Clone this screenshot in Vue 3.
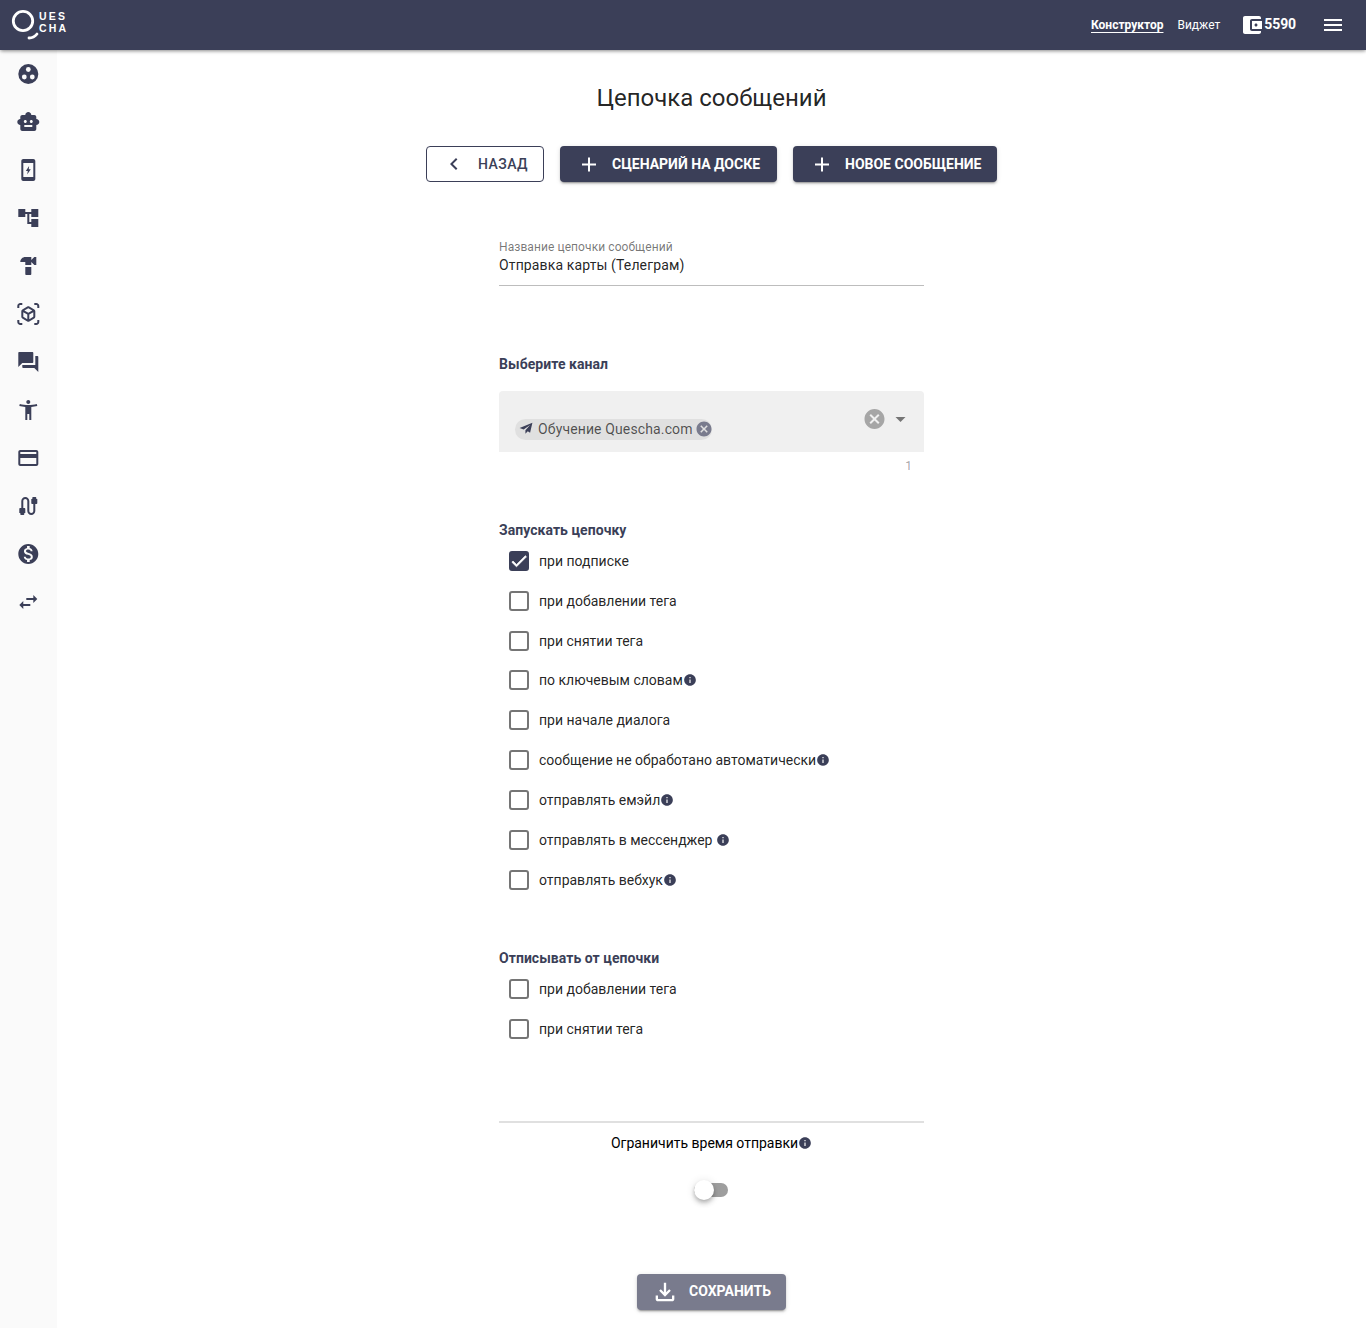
<template>
  <div class="page">
    <header class="topbar">
      <div class="logo">
        <svg class="logo-mark" width="30" height="34" viewBox="0 0 30 34">
          <circle cx="13" cy="12" r="9.7" fill="none" stroke="#fff" stroke-width="2.8" />
          <path d="M19 29c3 0 6-1.500 8-4" fill="none" stroke="#fff" stroke-width="2.800" stroke-linecap="round" />
        </svg>
        <div class="logo-text"><span>UES</span><span>CHA</span></div>
      </div>
      <nav class="topnav">
        <a class="topnav-link active">Конструктор</a>
        <a class="topnav-link">Виджет</a>
      </nav>
      <div class="balance">
        <svg width="24" height="24" viewBox="0 0 24 24" fill="#fff"><path :d="icons.wallet" /></svg>
        <span>5590</span>
      </div>
      <svg class="menu" width="24" height="24" viewBox="0 0 24 24" fill="#fff"><path d="M3 18h18v-2H3v2zm0-5h18v-2H3v2zm0-7v2h18V6H3z" /></svg>
    </header>

    <div class="body">
      <aside class="sidebar">
        <div v-for="item in sideItems" :key="item.name" class="side-item">
          <svg width="24" height="24" viewBox="-0.3 0 24 24" fill="#3b3f58">
            <template v-if="item.name === 'dots'">
              <circle cx="12" cy="12" r="10" />
              <circle cx="12" cy="7.500" r="2.400" fill="#fafafa" />
              <circle cx="8" cy="15" r="2.400" fill="#fafafa" />
              <circle cx="16" cy="15" r="2.400" fill="#fafafa" />
            </template>
            <path v-else :d="item.d" />
          </svg>
        </div>
      </aside>

      <main class="content">
        <h1 class="title">Цепочка сообщений</h1>

        <div class="actions">
          <button class="btn btn-outline">
            <svg width="24" height="24" viewBox="0 0 24 24" fill="currentColor"><path d="M15.41 7.41L14 6l-6 6 6 6 1.41-1.41L10.83 12z" /></svg>
            <span>Назад</span>
          </button>
          <button class="btn btn-dark btn-board">
            <svg width="24" height="24" viewBox="-1 -0.5 24 24" fill="currentColor"><path :d="icons.plus" /></svg>
            <span>Сценарий на доске</span>
          </button>
          <button class="btn btn-dark btn-new">
            <svg width="24" height="24" viewBox="-1 -0.5 24 24" fill="currentColor"><path :d="icons.plus" /></svg>
            <span>Новое сообщение</span>
          </button>
        </div>

        <form class="form" @submit.prevent>
          <div class="field">
            <div class="field-label">Название цепочки сообщений</div>
            <div class="field-value">Отправка карты (Телеграм)</div>
          </div>

          <div class="section-title channel-title">Выберите канал</div>
          <div class="select">
            <div class="chip">
              <svg class="chip-icon" width="14" height="14" viewBox="0 0 24 24" fill="#3b3f58"><path d="M23 3L1 12l7 2.500L19 7l-8 9v6l4-4.500 4 2.500z" /></svg>
              <span class="chip-text">Обучение Quescha.com</span>
              <svg class="chip-close" width="18" height="18" viewBox="0 0 24 24" fill="#797b8d"><path :d="icons.cancel" /></svg>
            </div>
            <svg class="select-clear" width="24" height="24" viewBox="-0.5 0 24 24" fill="#a6a6a6"><path :d="icons.cancel" /></svg>
            <svg class="select-caret" width="24" height="24" viewBox="-0.5 0 24 24" fill="#757575"><path d="M7 10l5 5 5-5z" /></svg>
          </div>
          <div class="counter">1</div>

          <div class="section-title start-title">Запускать цепочку</div>
          <div class="checks start-checks">
            <label v-for="row in startRows" :key="row.text" class="check-row">
              <span class="box" :class="{ checked: row.checked }">
                <svg v-if="row.checked" width="20" height="20" viewBox="0 0 24 24" fill="#fff" stroke="#fff" stroke-width="0.8"><path d="M9 16.170L4.830 12l-1.420 1.410L9 19 21 7l-1.410-1.410z" /></svg>
              </span>
              <span class="check-text">{{ row.text }}</span>
              <svg v-if="row.info" class="info" :class="{ spaced: row.spaced }" width="14" height="14" viewBox="0 0 24 24" fill="#3b3f58"><path :d="icons.info" /></svg>
            </label>
          </div>

          <div class="section-title stop-title">Отписывать от цепочки</div>
          <div class="checks stop-checks">
            <label v-for="text in stopRows" :key="text" class="check-row">
              <span class="box"></span>
              <span class="check-text">{{ text }}</span>
            </label>
          </div>

          <div class="limit">
            <span class="limit-text">Ограничить время отправки</span>
            <svg class="info" width="14" height="14" viewBox="0 0 24 24" fill="#3b3f58"><path :d="icons.info" /></svg>
          </div>
          <div class="switch-wrap">
            <div class="switch"><span class="thumb"></span></div>
          </div>

          <div class="save-wrap">
            <button class="btn btn-save">
              <svg width="28" height="28" viewBox="0 0 24 24" fill="currentColor"><path d="M18 15v3H6v-3H4v3c0 1.100.9 2 2 2h12c1.100 0 2-.9 2-2v-3h-2zm-1-4l-1.410-1.410L13 12.170V4h-2v8.170L8.410 9.590 7 11l5 5 5-5z" /></svg>
              <span>Сохранить</span>
            </button>
          </div>
        </form>
      </main>
    </div>
  </div>
</template>

<script setup>
const icons = {
  wallet: 'M21 18v1c0 1.100-.9 2-2 2H5c-1.110 0-2-.9-2-2V5c0-1.100.89-2 2-2h14c1.100 0 2 .9 2 2v1h-9c-1.110 0-2 .9-2 2v8c0 1.100.89 2 2 2h9zm-9-2h10V8H12v8zm4-2.500c-.83 0-1.500-.67-1.500-1.500s.67-1.500 1.500-1.500 1.500.67 1.500 1.500-.67 1.500-1.500 1.500z',
  plus: 'M19 13h-6v6h-2v-6H5v-2h6V5h2v6h6v2z',
  cancel: 'M12 2C6.470 2 2 6.470 2 12s4.470 10 10 10 10-4.470 10-10S17.530 2 12 2zm5 13.590L15.590 17 12 13.410 8.410 17 7 15.590 10.590 12 7 8.410 8.410 7 12 10.590 15.590 7 17 8.410 13.410 12 17 15.590z',
  info: 'M12 2C6.480 2 2 6.480 2 12s4.480 10 10 10 10-4.480 10-10S17.520 2 12 2zm1 15h-2v-6h2v6zm0-8h-2V7h2v2z'
}

const sideItems = [
  { name: 'dots' },
  { name: 'robot', d: 'M20 9V7c0-1.100-.9-2-2-2h-3c0-1.660-1.340-3-3-3S9 3.340 9 5H6c-1.100 0-2 .9-2 2v2c-1.660 0-3 1.340-3 3s1.340 3 3 3v4c0 1.100.9 2 2 2h12c1.100 0 2-.9 2-2v-4c1.660 0 3-1.340 3-3s-1.340-3-3-3zM7.500 11.500c0-.83.67-1.500 1.500-1.500s1.500.67 1.500 1.500S9.830 13 9 13s-1.500-.67-1.500-1.500zM16 17H8v-2h8v2zm-1-4c-.83 0-1.500-.67-1.500-1.500S14.170 10 15 10s1.500.67 1.500 1.500S15.830 13 15 13z' },
  { name: 'phone', d: 'M17 1H7c-1.100 0-2 .9-2 2v18c0 1.100.9 2 2 2h10c1.100 0 2-.9 2-2V3c0-1.100-.9-2-2-2zm0 18H7V5h10v14zM12.800 8l-3.300 5h2l-.6 3.500 3.600-5.300h-2z' },
  { name: 'tree', d: 'M22 11V3h-7v3H9V3H2v8h7V8h2v10h4v3h7v-8h-7v3h-2V8h2v3z' },
  { name: 'hammer', d: 'M18 3l-3 3V3H9C6.240 3 4 5.240 4 8h5v3h6V8l3 3h2V3h-2zM9 13v7c0 .55.45 1 1 1h4c.55 0 1-.45 1-1v-7H9z' },
  { name: 'cube', d: 'M3 4c0-.55.45-1 1-1h2V1H4C2.340 1 1 2.340 1 4v2h2V4zm0 16v-2H1v2c0 1.660 1.340 3 3 3h2v-2H4c-.55 0-1-.45-1-1zM20 1h-2v2h2c.55 0 1 .45 1 1v2h2V4c0-1.660-1.340-3-3-3zm1 19c0 .55-.45 1-1 1h-2v2h2c1.660 0 3-1.340 3-3v-2h-2v2zm-2-5.130V9.130c0-.72-.38-1.380-1-1.730l-5-2.880c-.31-.18-.65-.27-1-.27s-.69.09-1 .27L6 7.390c-.62.36-1 1.020-1 1.740v5.740c0 .72.38 1.380 1 1.730l5 2.880c.31.18.65.27 1 .27s.69-.09 1-.27l5-2.880c.62-.35 1-1.010 1-1.730zm-8 2.300l-4-2.300v-4.630l4 2.330v4.600zm1-6.330L8.040 8.530 12 6.250l3.960 2.280L12 10.840zm5 4.030l-4 2.300v-4.600l4-2.330v4.630z' },
  { name: 'forum', d: 'M21 6h-2v9H6v2c0 .55.45 1 1 1h11l4 4V7c0-.55-.45-1-1-1zm-4 6V3c0-.55-.45-1-1-1H3c-.55 0-1 .45-1 1v14l4-4h10c.55 0 1-.45 1-1z' },
  { name: 'person', d: 'M20.500 6c-2.610.7-5.670 1-8.500 1s-5.890-.3-8.500-1L3 8c1.860.5 4 .83 6 1v13h2v-6h2v6h2V9c2-.17 4.140-.5 6-1l-.5-2zM12 6c1.100 0 2-.9 2-2s-.9-2-2-2-2 .9-2 2 .9 2 2 2z' },
  { name: 'card', d: 'M20 4H4c-1.110 0-1.990.89-1.990 2L2 18c0 1.110.89 2 2 2h16c1.110 0 2-.89 2-2V6c0-1.110-.89-2-2-2zm0 14H4v-6h16v6zm0-10H4V6h16v2z' },
  { name: 'cable', d: 'M20 5V4c0-.55-.45-1-1-1h-2c-.55 0-1 .45-1 1v1h-1v4c0 .55.45 1 1 1h1v7c0 1.100-.9 2-2 2s-2-.9-2-2V7c0-2.210-1.790-4-4-4S5 4.790 5 7v7H4c-.55 0-1 .45-1 1v4h1v1c0 .55.45 1 1 1h2c.55 0 1-.45 1-1v-1h1v-4c0-.55-.45-1-1-1H7V7c0-1.100.9-2 2-2s2 .9 2 2v10c0 2.210 1.790 4 4 4s4-1.790 4-4v-7h1c.55 0 1-.45 1-1V5h-1z' },
  { name: 'money', d: 'M12 2C6.480 2 2 6.480 2 12s4.480 10 10 10 10-4.480 10-10S17.520 2 12 2zm1.410 16.090V20h-2.670v-1.930c-1.710-.36-3.160-1.460-3.270-3.400h1.960c.1 1.050.82 1.870 2.650 1.870 1.960 0 2.400-.98 2.400-1.590 0-.83-.44-1.610-2.670-2.140-2.480-.6-4.180-1.620-4.180-3.670 0-1.720 1.390-2.840 3.110-3.210V4h2.670v1.950c1.860.45 2.790 1.860 2.850 3.390H14.300c-.05-1.110-.64-1.870-2.220-1.870-1.500 0-2.400.68-2.400 1.640 0 .84.65 1.390 2.670 1.910s4.180 1.390 4.180 3.910c-.01 1.830-1.380 2.830-3.120 3.160z' },
  { name: 'swap', d: 'M6.990 11L3 15l3.990 4v-3H14v-2H6.990v-3zM21 9l-3.990-4v3H10v2h7.010v3L21 9z' }
]

const startRows = [
  { text: 'при подписке', checked: true },
  { text: 'при добавлении тега' },
  { text: 'при снятии тега' },
  { text: 'по ключевым словам', info: true },
  { text: 'при начале диалога' },
  { text: 'сообщение не обработано автоматически', info: true },
  { text: 'отправлять емэйл', info: true },
  { text: 'отправлять в мессенджер', info: true, spaced: true },
  { text: 'отправлять вебхук', info: true }
]

const stopRows = ['при добавлении тега', 'при снятии тега']
</script>

<style scoped>
.page {
  min-height: 1328px;
  display: flex;
  flex-direction: column;
  font-family: Roboto, "Noto Sans", sans-serif;
  color: rgba(0, 0, 0, 0.87);
  background: #fff;
}

.topbar {
  height: 50px;
  flex: none;
  display: flex;
  align-items: center;
  background: #3b3f58;
  color: #fff;
  box-shadow: 0 2px 4px -1px rgba(0, 0, 0, 0.3), 0 1px 3px rgba(0, 0, 0, 0.2);
  position: relative;
  z-index: 2;
}

.logo {
  display: flex;
  width: 1091px;
  height: 50px;
  padding: 9px 0 0 10px;
  box-sizing: border-box;
}

.logo-text {
  display: flex;
  flex-direction: column;
  margin: 1px 0 0 -1px;
  font-family: "Liberation Sans", sans-serif;
  font-size: 10.500px;
  font-weight: 700;
  line-height: 12.200px;
  letter-spacing: 2.200px;
}

.topnav {
  display: flex;
  gap: 14px;
  font-size: 12px;
}

.topnav-link.active {
  font-weight: 700;
  text-decoration: underline;
  text-underline-offset: 3px;
}

.balance {
  display: flex;
  align-items: center;
  margin-left: 20px;
  font-size: 14px;
  font-weight: 700;
}

.balance span {
  margin: -2px 1px 0 0;
  letter-spacing: -0.100px;
}

.menu {
  margin-left: 24px;
}

.body {
  flex: 1;
  display: flex;
}

.sidebar {
  width: 57px;
  flex: none;
  background: #fafafa;
}

.side-item {
  height: 48px;
  padding-left: 16px;
  display: flex;
  align-items: center;
}

.content {
  flex: 1;
  padding-top: 32px;
  display: flex;
  flex-direction: column;
  align-items: center;
}

.title {
  margin: 0;
  font-size: 24px;
  font-weight: 400;
  line-height: 32px;
}

.actions {
  display: flex;
  gap: 16px;
  margin-top: 32px;
}

.btn {
  height: 36px;
  padding: 0 16px;
  display: flex;
  align-items: center;
  gap: 12px;
  box-sizing: border-box;
  border: none;
  border-radius: 4px;
  font-family: inherit;
  font-size: 14px;
  font-weight: 500;
  text-transform: uppercase;
  white-space: nowrap;
}

.btn span {
  margin-top: -1px;
}

.btn-outline {
  width: 118px;
  background: #fff;
  border: 1px solid #3b3f58;
  color: #3b3f58;
  letter-spacing: 0.450px;
  padding: 0 15px;
}

.btn-dark {
  background: #3b3f58;
  color: #fff;
  font-weight: 700;
  padding-right: 0;
  box-shadow: 0 3px 1px -2px rgba(0, 0, 0, 0.2), 0 2px 2px rgba(0, 0, 0, 0.14), 0 1px 5px rgba(0, 0, 0, 0.12);
}

.btn-board {
  width: 217px;
}

.btn-new {
  width: 204px;
}

.form {
  width: 425px;
  margin-top: 52px;
  display: flex;
  flex-direction: column;
}

.field {
  border-bottom: 1px solid #bdbdbd;
  height: 52px;
  padding-top: 5px;
  box-sizing: border-box;
}

.field-label {
  font-size: 12px;
  line-height: 16px;
  letter-spacing: 0.080px;
  color: rgba(0, 0, 0, 0.54);
}

.field-value {
  font-size: 14px;
  line-height: 20px;
  letter-spacing: 0.130px;
}

.section-title {
  font-size: 14px;
  font-weight: 700;
  line-height: 20px;
  letter-spacing: 0.050px;
  color: #3b3f58;
}

.channel-title {
  margin-top: 68px;
}

.select {
  position: relative;
  height: 61px;
  margin-top: 17px;
  background: #f0f0f0;
  border-radius: 4px 4px 0 0;
}

.chip {
  position: absolute;
  left: 16px;
  top: 28px;
  height: 21px;
  width: 197px;
  padding: 0 0 0 4px;
  box-sizing: border-box;
  display: flex;
  align-items: center;
  background: #e0e0e0;
  border-radius: 11px;
}

.chip-icon {
  flex: none;
  margin-top: -3px;
}

.chip-text {
  margin: -2px 0 0 5px;
  font-size: 14px;
  color: rgba(0, 0, 0, 0.66);
  letter-spacing: 0.130px;
  white-space: nowrap;
}

.chip-close {
  flex: none;
  margin: -1px 0 0 2px;
}

.select-clear {
  position: absolute;
  left: 363px;
  top: 16px;
}

.select-caret {
  position: absolute;
  left: 389px;
  top: 16px;
}

.counter {
  height: 28px;
  padding-right: 12px;
  font-size: 12px;
  line-height: 28px;
  text-align: right;
  color: rgba(0, 0, 0, 0.38);
}

.start-title {
  margin-top: 40px;
}

.checks {
  display: flex;
  flex-direction: column;
}

.start-checks {
  margin-top: 0.900px;
}

.check-row {
  height: 39.875px;
  padding-left: 10px;
  display: flex;
  align-items: center;
  font-size: 14px;
}

.box {
  width: 20px;
  height: 20px;
  flex: none;
  box-sizing: border-box;
  border: 2px solid #757575;
  border-radius: 3px;
  display: flex;
  align-items: center;
  justify-content: center;
}

.box.checked {
  background: #3b3f58;
  border-color: #3b3f58;
}

.box svg {
  flex: none;
}

.check-text {
  margin-left: 10px;
}

.info {
  flex: none;
}

.info.spaced {
  margin-left: 4px;
}

.stop-title {
  margin-top: 48.100px;
}

.stop-checks {
  margin-top: 1px;
}

.limit {
  margin-top: 72px;
  padding-top: 10px;
  border-top: 2px solid #e0e0e0;
  display: flex;
  align-items: center;
  justify-content: center;
  font-size: 14px;
  line-height: 20px;
}

.limit-text {
  color: #000;
}

.switch-wrap {
  margin-top: 30px;
  display: flex;
  justify-content: center;
}

.switch {
  position: relative;
  width: 34px;
  height: 14px;
  margin-left: -1px;
  background: #9e9e9e;
  border-radius: 7px;
}

.thumb {
  position: absolute;
  left: 0;
  top: -3px;
  width: 20px;
  height: 20px;
  background: #fff;
  border-radius: 50%;
  box-shadow: 0 2px 4px -1px rgba(0, 0, 0, 0.2), 0 4px 5px rgba(0, 0, 0, 0.14), 0 1px 10px rgba(0, 0, 0, 0.12);
}

.save-wrap {
  margin-top: 77px;
  display: flex;
  justify-content: center;
}

.btn-save {
  background: #797b8d;
  color: #fff;
  font-weight: 700;
  gap: 10px;
  padding: 0 15px 0 14px;
  box-shadow: 0 3px 1px -2px rgba(0, 0, 0, 0.2), 0 2px 2px rgba(0, 0, 0, 0.14), 0 1px 5px rgba(0, 0, 0, 0.12);
}
</style>
